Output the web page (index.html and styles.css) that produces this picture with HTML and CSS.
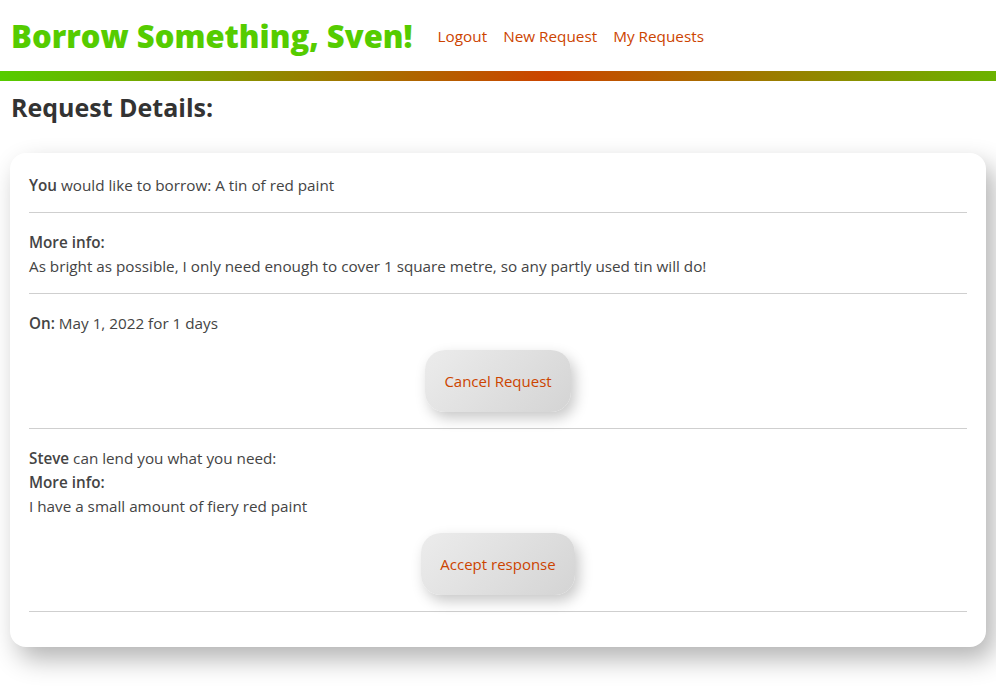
FILE: index.html
```html
<!DOCTYPE html>
<html lang="en">
<head>
<meta charset="utf-8">
<title>Request Details</title>
<link rel="stylesheet" href="styles.css">
</head>
<body>
<header class="site-header">
  <h1 class="brand">Borrow Something, Sven!</h1>
  <nav class="nav">
    <a href="#" class="nav-link">Logout</a>
    <a href="#" class="nav-link">New Request</a>
    <a href="#" class="nav-link">My Requests</a>
  </nav>
</header>
<div class="rainbow-bar"></div>
<main class="content">
  <h2 class="page-title">Request Details:</h2>
  <section class="card">
    <div class="section">
      <p class="line"><strong>You</strong> would like to borrow: A tin of red paint</p>
    </div>
    <div class="section">
      <p class="line"><strong>More info:</strong></p>
      <p class="line">As bright as possible, I only need enough to cover 1 square metre, so any partly used tin will do!</p>
    </div>
    <div class="section">
      <p class="line"><strong>On:</strong> May 1, 2022 for 1 days</p>
      <button class="btn">Cancel Request</button>
    </div>
    <div class="section">
      <p class="line"><strong>Steve</strong> can lend you what you need:</p>
      <p class="line"><strong>More info:</strong></p>
      <p class="line">I have a small amount of fiery red paint</p>
      <button class="btn">Accept response</button>
    </div>
  </section>
</main>
</body>
</html>
```
FILE: styles.css
```css
* { box-sizing: border-box; }
html, body {
  margin: 0;
  padding: 0;
  background: #fff;
}
body {
  font-family: "Open Sans", Lato, sans-serif;
  color: #444;
  font-size: 15.25px;
}
.site-header {
  height: 71px;
  display: flex;
  align-items: center;
  padding: 0 11px;
  gap: 25px;
}
.brand {
  margin: 0;
  font-size: 31px;
  font-weight: 800;
  color: #55cc00;
  line-height: 40px;
}
.nav {
  display: flex;
  gap: 16px;
}
.nav-link {
  color: #cc4400;
  text-decoration: none;
  font-size: 15.3px;
}
.rainbow-bar {
  height: 10px;
  background: linear-gradient(to right, #55cc00 0, #cc4400 548px, #55cc00 1096px);
}
.content {
  padding: 0 10px 40px;
}
.page-title {
  margin: 11px 1px 30px;
  font-size: 25px;
  line-height: 31px;
  color: #333;
  font-weight: 700;
}
.card {
  background: #fff;
  border-radius: 16px;
  padding: 3px 19px 35px;
  box-shadow: 8px 12px 26px rgba(0, 0, 0, 0.3);
}
.section {
  padding: 17px 0 15px;
  border-bottom: 1px solid #cfcfcf;
  display: flex;
  flex-direction: column;
}
.line {
  margin: 0;
  line-height: 24px;
}
.line strong {
  color: #444;
  font-weight: 600;
}
.btn {
  align-self: center;
  margin: 15px 0 1px;
  padding: 19px 19px;
  border: none;
  border-radius: 20px;
  background: linear-gradient(135deg, #ececec, #d4d4d4);
  box-shadow: 4px 6px 14px rgba(0, 0, 0, 0.22);
  color: #cc4400;
  font-family: inherit;
  font-size: 15px;
  line-height: 24px;
  cursor: pointer;
}
```
